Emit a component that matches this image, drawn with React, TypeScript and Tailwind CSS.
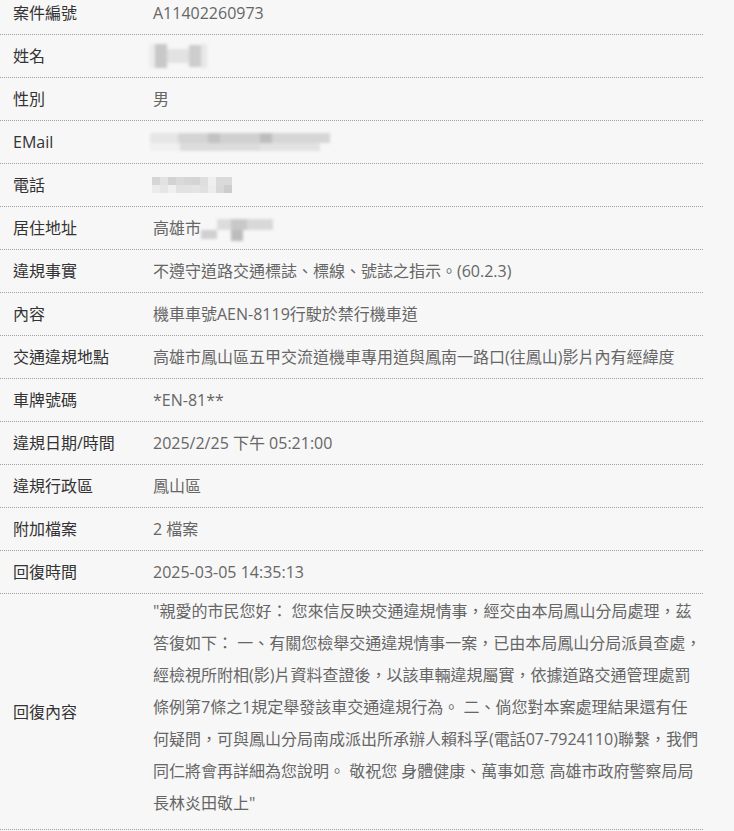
import React from "react";

function Row({ label, children }: { label: string; children: React.ReactNode }) {
  return (
    <div className="flex h-[43px] items-center border-b border-dotted border-[#a0a0a0]">
      <div className="w-[140px] shrink-0 pl-[13px] text-[#333]">{label}</div>
      <div className="flex flex-1 items-center whitespace-nowrap pl-[13px] text-[#666]">{children}</div>
    </div>
  );
}

const phoneCells = [
  "#d6d6d6", "#e2e2e2", "#d2d2d2", "#d9d9d9", "#d6d6d6", "#d4d4d4", "#dedede", "#efefef", "#dadada", "#dadada",
  "#ececec", "#e6e6e6", "#f0f0f0", "#e2e2e2", "#e2e2e2", "#e4e4e4", "#e0e0e0", "#ececec", "#d8d8d8", "#cdcdcd",
];

export default function App() {
  const font = { fontFamily: '"Open Sans", "Noto Sans CJK TC", sans-serif' };
  return (
    <div className="min-h-[831px] w-[734px] overflow-hidden bg-[#f7f7f7] text-[16px]" style={font}>
      <div className="-mt-[8px] w-[703px]">
        <Row label="案件編號">A11402260973</Row>
        <Row label="姓名">
          <span className="-ml-[4px] flex h-[24px] w-[58px] items-stretch blur-[1.5px]">
            <span className="w-[6px] bg-[#ececec]" />
            <span className="w-[12px] bg-[#c8c8c8]" />
            <span className="my-[5px] w-[22px] bg-[#e2e2e2]" />
            <span className="my-[1px] w-[12px] bg-[#cdcdcd]" />
            <span className="w-[6px] bg-[#e8e8e8]" />
          </span>
        </Row>
        <Row label="性別">男</Row>
        <Row label="EMail">
          <span className="-ml-[3px] flex h-[22px] w-[180px] flex-col justify-center blur-[1.5px]">
            <span className="flex h-[10px]">
              <span className="w-[28px] bg-[#e6e6e6]" />
              <span className="w-[30px] bg-[#d4d4d4]" />
              <span className="w-[12px] bg-[#c2c2c2]" />
              <span className="w-[40px] bg-[#d0d0d0]" />
              <span className="w-[12px] bg-[#bdbdbd]" />
              <span className="w-[58px] bg-[#d6d6d6]" />
            </span>
            <span className="flex h-[8px]">
              <span className="w-[30px] bg-[#f0f0f0]" />
              <span className="w-[80px] bg-[#dcdcdc]" />
              <span className="w-[60px] bg-[#e2e2e2]" />
            </span>
          </span>
        </Row>
        <Row label="電話">
          <span className="-ml-[1px] grid grid-cols-[repeat(10,8px)] grid-rows-[8px_8px]">
            {phoneCells.map((c, i) => (
              <span key={i} style={{ backgroundColor: c }} />
            ))}
          </span>
        </Row>
        <Row label="居住地址">
          高雄市
          <span className="flex h-[26px] w-[72px] items-end blur-[1.5px]">
            <span className="mb-[2px] h-[9px] w-[16px] bg-[#d0d0d0]" />
            <span className="flex h-[24px] flex-col">
              <span className="mt-[2px] flex h-[11px]">
                <span className="w-[14px] bg-[#dcdcdc]" />
                <span className="w-[16px] bg-[#c8c8c8]" />
                <span className="w-[26px] bg-[#d8d8d8]" />
              </span>
              <span className="ml-[14px] h-[11px] w-[12px] bg-[#bcbcbc]" />
            </span>
          </span>
        </Row>
        <Row label="違規事實">不遵守道路交通標誌、標線、號誌之指示。(60.2.3)</Row>
        <Row label="內容">機車車號AEN-8119行駛於禁行機車道</Row>
        <Row label="交通違規地點">高雄市鳳山區五甲交流道機車專用道與鳳南一路口(往鳳山)影片內有經緯度</Row>
        <Row label="車牌號碼">*EN-81**</Row>
        <Row label="違規日期/時間">2025/2/25 下午 05:21:00</Row>
        <Row label="違規行政區">鳳山區</Row>
        <Row label="附加檔案">2 檔案</Row>
        <Row label="回復時間">2025-03-05 14:35:13</Row>
        <div className="flex items-center border-b border-dotted border-[#a0a0a0]">
          <div className="w-[140px] shrink-0 pl-[13px] text-[#333]">回復內容</div>
          <div className="flex-1 whitespace-nowrap pb-[10px] pl-[13px] pt-[1px] leading-[32px] text-[#666]">
            "親愛的市民您好： 您來信反映交通違規情事，經交由本局鳳山分局處理，茲<br />
            答復如下： 一、有關您檢舉交通違規情事一案，已由本局鳳山分局派員查處，<br />
            經檢視所附相(影)片資料查證後，以該車輛違規屬實，依據道路交通管理處罰<br />
            條例第7條之1規定舉發該車交通違規行為。 二、倘您對本案處理結果還有任<br />
            何疑問，可與鳳山分局南成派出所承辦人賴科孚(電話07-7924110)聯繫，我們<br />
            同仁將會再詳細為您說明。 敬祝您 身體健康、萬事如意 高雄市政府警察局局<br />
            長林炎田敬上"
          </div>
        </div>
      </div>
    </div>
  );
}
